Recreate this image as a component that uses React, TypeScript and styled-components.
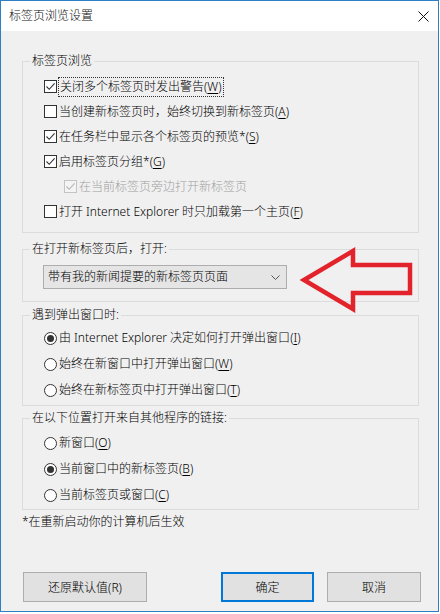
import React from "react";
import styled, { createGlobalStyle } from "styled-components";

const GlobalStyle = createGlobalStyle`
  html, body {
    margin: 0;
    padding: 0;
    background: #ffffff;
  }
  body {
    font-family: "Noto Sans", "Noto Sans CJK SC", sans-serif;
    font-size: 12px;
    font-weight: 300;
    color: #000;
  }
`;

type checkItem = {
  label: string;
  hotkey?: string;
  checked: boolean;
  disabled?: boolean;
  indent?: boolean;
  focused?: boolean;
};

type radioItem = {
  label: string;
  hotkey: string;
  selected: boolean;
};

const tabItems: checkItem[] = [
  { label: "关闭多个标签页时发出警告", hotkey: "W", checked: true, focused: true },
  { label: "当创建新标签页时，始终切换到新标签页", hotkey: "A", checked: false },
  { label: "在任务栏中显示各个标签页的预览*", hotkey: "S", checked: true },
  { label: "启用标签页分组*", hotkey: "G", checked: true },
  { label: "在当前标签页旁边打开新标签页", checked: true, disabled: true, indent: true },
  { label: "打开 Internet Explorer 时只加载第一个主页", hotkey: "F", checked: false },
];

const popupItems: radioItem[] = [
  { label: "由 Internet Explorer 决定如何打开弹出窗口", hotkey: "I", selected: true },
  { label: "始终在新窗口中打开弹出窗口", hotkey: "W", selected: false },
  { label: "始终在新标签页中打开弹出窗口", hotkey: "T", selected: false },
];

const linkItems: radioItem[] = [
  { label: "新窗口", hotkey: "O", selected: false },
  { label: "当前窗口中的新标签页", hotkey: "B", selected: true },
  { label: "当前标签页或窗口", hotkey: "C", selected: false },
];

const LabelText = ({ label, hotkey }: { label: string; hotkey?: string }) => (
  <>
    {label}
    {hotkey && (
      <>
        (<u>{hotkey}</u>)
      </>
    )}
  </>
);

export default function App() {
  return (
    <>
      <GlobalStyle />
      <Window>
        <TitleBar>
          <span>标签页浏览设置</span>
          <CloseIcon width="11" height="11" viewBox="0 0 11 11">
            <path d="M0.5 0.5 L10.5 10.5 M10.5 0.5 L0.5 10.5" stroke="#111" strokeWidth="1" />
          </CloseIcon>
        </TitleBar>
        <Content>
          <Group $mt={22} $pt={5} $pb={8}>
            <Legend>标签页浏览</Legend>
            {tabItems.map((item) => (
              <Row key={item.label} $h={25} $indent={item.indent}>
                <CheckBox $disabled={item.disabled}>
                  {item.checked && (
                    <svg width="11" height="11" viewBox="0 0 11 11">
                      <path
                        d="M1.5 5.5 L4.2 8.3 L9.6 2.4"
                        fill="none"
                        stroke={item.disabled ? "#b5b5b5" : "#333"}
                        strokeWidth="1.1"
                      />
                    </svg>
                  )}
                </CheckBox>
                <ItemLabel $disabled={item.disabled} $focused={item.focused}>
                  <LabelText label={item.label} hotkey={item.hotkey} />
                </ItemLabel>
              </Row>
            ))}
          </Group>

          <Group $mt={8} $pt={8} $pb={12}>
            <Legend>在打开新标签页后，打开:</Legend>
            <Select>
              <span>带有我的新闻提要的新标签页页面</span>
              <svg width="9" height="5" viewBox="0 0 9 5">
                <path d="M0.5 0.5 L4.5 4.5 L8.5 0.5" fill="none" stroke="#555" strokeWidth="1" />
              </svg>
            </Select>
          </Group>

          <Group $mt={5} $pt={2} $pb={2}>
            <Legend>遇到弹出窗口时:</Legend>
            {popupItems.map((item) => (
              <Row key={item.label} $h={26}>
                <Radio $selected={item.selected} />
                <ItemLabel>
                  <LabelText label={item.label} hotkey={item.hotkey} />
                </ItemLabel>
              </Row>
            ))}
          </Group>

          <Group $mt={4} $pt={4} $pb={1}>
            <Legend>在以下位置打开来自其他程序的链接:</Legend>
            {linkItems.map((item) => (
              <Row key={item.label} $h={26}>
                <Radio $selected={item.selected} />
                <ItemLabel>
                  <LabelText label={item.label} hotkey={item.hotkey} />
                </ItemLabel>
              </Row>
            ))}
          </Group>

          <Note>*在重新启动你的计算机后生效</Note>
        </Content>

        <Footer>
          <Button $w={124}>还原默认值(R)</Button>
          <Spacer />
          <Button $w={93} $primary>
            确定
          </Button>
          <Button $w={94}>取消</Button>
        </Footer>

        <Arrow width="440" height="614" viewBox="0 0 440 614">
          <polygon
            points="304,280 353,251 353,265 410,265 410,293 353,293 353,309"
            fill="none"
            stroke="#e2232b"
            strokeWidth="4.5"
            strokeLinejoin="miter"
          />
        </Arrow>
      </Window>
    </>
  );
}

//STYLED COMPONENTS

const Window = styled.div`
  position: relative;
  box-sizing: border-box;
  width: 439px;
  height: 612px;
  border: 1px solid #2f7fc4;
  background: #f0f0f0;
  display: flex;
  flex-direction: column;
`;

const TitleBar = styled.div`
  height: 30px;
  flex: none;
  background: #fff;
  display: flex;
  align-items: center;
  justify-content: space-between;
  padding: 0 9px 0 8px;
  font-size: 12px;
  line-height: 16px;
  color: #111;
`;

const CloseIcon = styled.svg`
  display: block;
`;

const Content = styled.div`
  padding: 0 19px 0 21px;
  display: flex;
  flex-direction: column;
`;

const Group = styled.fieldset<{ $mt: number; $pt: number; $pb: number }>`
  margin: ${({ $mt }) => $mt}px 0 0 0;
  padding: ${({ $pt }) => $pt}px 0 ${({ $pb }) => $pb}px 0;
  min-width: 0;
  border: 1px solid #dcdcdc;
`;

const Legend = styled.legend`
  margin-left: 7px;
  padding: 0 2px;
  line-height: 16px;
  font-size: 12px;
  color: #000;
`;

const Row = styled.div<{ $h: number; $indent?: boolean }>`
  height: ${({ $h }) => $h}px;
  display: flex;
  align-items: center;
  padding-left: ${({ $indent }) => ($indent ? 41 : 21)}px;
  white-space: nowrap;
`;

const CheckBox = styled.span<{ $disabled?: boolean }>`
  box-sizing: border-box;
  width: 13px;
  height: 13px;
  flex: none;
  border: 1px solid ${({ $disabled }) => ($disabled ? "#c4c4c4" : "#333")};
  background: ${({ $disabled }) => ($disabled ? "#f4f4f4" : "#fff")};
  display: flex;
  align-items: center;
  justify-content: center;
  svg {
    display: block;
  }
`;

const Radio = styled.span<{ $selected?: boolean }>`
  box-sizing: border-box;
  width: 13px;
  height: 13px;
  flex: none;
  border: 1px solid #333;
  border-radius: 50%;
  background: #fff;
  display: flex;
  align-items: center;
  justify-content: center;
  &:after {
    content: "";
    display: ${({ $selected }) => ($selected ? "block" : "none")};
    width: 7px;
    height: 7px;
    border-radius: 50%;
    background: #333;
  }
`;

const ItemLabel = styled.span<{ $disabled?: boolean; $focused?: boolean }>`
  margin-left: ${({ $focused }) => ($focused ? 1 : 2)}px;
  padding: 1px ${({ $focused }) => ($focused ? 1 : 0)}px;
  line-height: 16px;
  font-size: 12px;
  color: ${({ $disabled }) => ($disabled ? "#a0a0a0" : "#000")};
  border: ${({ $focused }) => ($focused ? "1px dotted #333" : "none")};
  u {
    text-underline-offset: 2px;
  }
`;

const Select = styled.div`
  box-sizing: border-box;
  margin-left: 20px;
  width: 244px;
  height: 24px;
  border: 1px solid #adadad;
  background: #e5e5e5;
  display: flex;
  align-items: center;
  justify-content: space-between;
  padding: 0 6px 0 4px;
  font-size: 12px;
  line-height: 16px;
  svg {
    display: block;
  }
`;

const Note = styled.div`
  margin-top: 4px;
  padding-left: 0;
  line-height: 16px;
  font-size: 12px;
`;

const Footer = styled.div`
  margin-top: auto;
  display: flex;
  align-items: center;
  gap: 13px;
  padding: 0 17px 9px 22px;
`;

const Spacer = styled.div`
  flex: 1;
`;

const Button = styled.button<{ $w: number; $primary?: boolean }>`
  box-sizing: border-box;
  width: ${({ $w }) => $w}px;
  height: 30px;
  margin: 0;
  padding: 0;
  font-family: "Noto Sans", "Noto Sans CJK SC", sans-serif;
  font-size: 12px;
  font-weight: 300;
  color: #000;
  background: #e1e1e1;
  border: ${({ $primary }) => ($primary ? "2px solid #0078d7" : "1px solid #adadad")};
  border-radius: 0;
`;

const Arrow = styled.svg`
  position: absolute;
  left: -1px;
  top: -1px;
  pointer-events: none;
`;
